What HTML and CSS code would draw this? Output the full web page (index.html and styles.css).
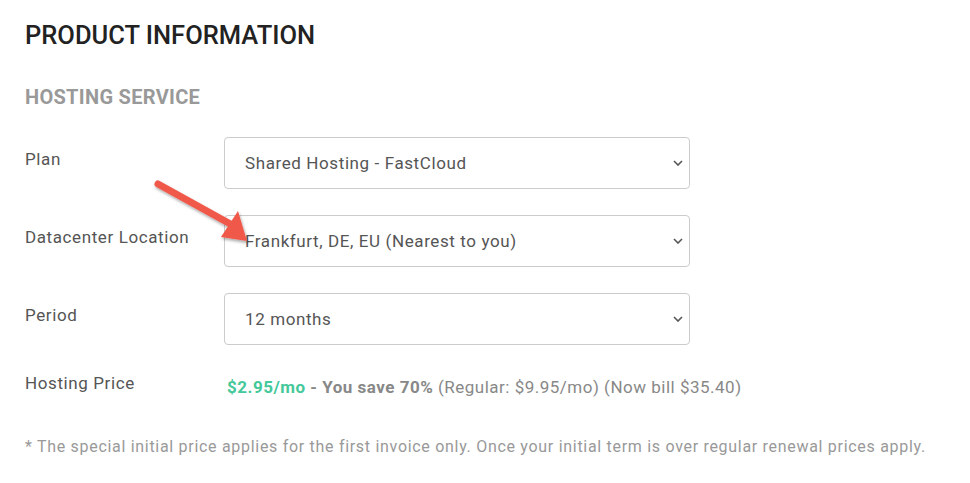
FILE: index.html
```html
<!DOCTYPE html>
<html>

<head>
    <title>Product Information</title>
    <meta charset="UTF-8">
    <link rel="stylesheet" href="styles.css">
</head>

<body>
    <div class="container">
        <h1>PRODUCT INFORMATION</h1>
        <h2>HOSTING SERVICE</h2>
        <div class="form">
            <label class="form-label">Plan</label>
            <div class="select-wrap">
                <select class="form-select">
                    <option>Shared Hosting - FastCloud</option>
                </select>
                <svg class="chevron" viewBox="0 0 10 6" width="10" height="6"><path d="M1 1l4 4 4-4" fill="none" stroke="#555" stroke-width="1.6"/></svg>
            </div>

            <label class="form-label">Datacenter Location</label>
            <div class="select-wrap">
                <select class="form-select">
                    <option>Frankfurt, DE, EU (Nearest to you)</option>
                </select>
                <svg class="chevron" viewBox="0 0 10 6" width="10" height="6"><path d="M1 1l4 4 4-4" fill="none" stroke="#555" stroke-width="1.6"/></svg>
                <!-- pointer arrow -->
                <svg class="pointer" viewBox="0 0 110 70" width="110" height="70">
                    <defs>
                        <filter id="shadow" x="-20%" y="-20%" width="140%" height="140%">
                            <feDropShadow dx="1" dy="2" stdDeviation="1.5" flood-color="#000" flood-opacity="0.35"/>
                        </filter>
                    </defs>
                    <g filter="url(#shadow)">
                        <line x1="6" y1="6" x2="82" y2="48" stroke="#f0584a" stroke-width="7" stroke-linecap="round"/>
                        <polygon points="95,63 69,59 86,33" fill="#f0584a"/>
                    </g>
                </svg>
            </div>

            <label class="form-label">Period</label>
            <div class="select-wrap">
                <select class="form-select">
                    <option>12 months</option>
                </select>
                <svg class="chevron" viewBox="0 0 10 6" width="10" height="6"><path d="M1 1l4 4 4-4" fill="none" stroke="#555" stroke-width="1.6"/></svg>
            </div>

            <label class="form-label price-label">Hosting Price</label>
            <div class="price">
                <span class="price-now">$2.95/mo</span>
                <span class="price-save">- You save 70%</span>
                (Regular: $9.95/mo) (Now bill $35.40)
            </div>
        </div>
        <p class="note">* The special initial price applies for the first invoice only. Once your initial term is over regular renewal prices apply.</p>
    </div>
</body>

</html>
```

FILE: styles.css
```css
body {
    margin: 0;
    background-color: #ffffff;
    font-family: Roboto, "Liberation Sans", sans-serif;
    color: #555555;
}

.container {
    padding: 20px 25px;
}

h1 {
    margin: 0;
    font-size: 25.5px;
    font-weight: 500;
    color: #222222;
    line-height: 30px;
}

h2 {
    margin: 35px 0 0;
    font-size: 20px;
    font-weight: 700;
    color: #999999;
    line-height: 24px;
    letter-spacing: 0.3px;
}

.form {
    display: grid;
    grid-template-columns: 199px 466px;
    row-gap: 26px;
    margin-top: 28px;
    align-items: center;
}

.form-label {
    font-size: 17px;
    letter-spacing: 0.6px;
    color: #555555;
    align-self: start;
    padding-top: 12px;
}

.select-wrap {
    position: relative;
}

.form-select {
    appearance: none;
    -webkit-appearance: none;
    width: 100%;
    height: 52px;
    padding: 0 30px 0 20px;
    border: 1px solid #cccccc;
    border-radius: 4px;
    background-color: #ffffff;
    font-family: inherit;
    font-size: 17px;
    letter-spacing: 0.6px;
    color: #555555;
}

.chevron {
    position: absolute;
    right: 7px;
    top: 23px;
}

.pointer {
    position: absolute;
    left: -72px;
    top: -37px;
}

.price-label {
    padding-top: 0;
    margin-top: 2px;
}

.price {
    font-size: 17px;
    letter-spacing: 0.5px;
    color: #888888;
    padding-left: 3px;
    margin-top: 6px;
    white-space: nowrap;
}

.price-now {
    color: #45c89a;
    font-weight: 700;
}

.price-save {
    font-weight: 700;
}

.note {
    margin: 40px 0 0;
    font-size: 16px;
    color: #999999;
    letter-spacing: 0.7px;
}
```
